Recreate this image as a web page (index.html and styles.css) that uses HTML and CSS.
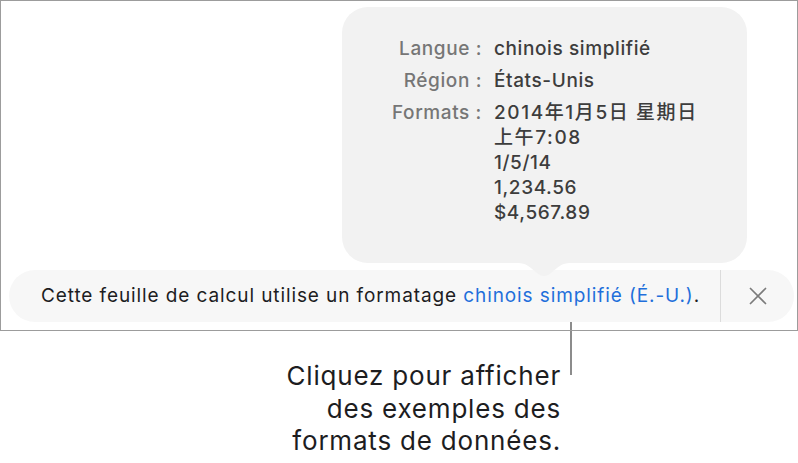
FILE: index.html
```html
<!DOCTYPE html>
<html lang="fr">
<head>
  <meta charset="UTF-8" />
  <title>Formatage de la feuille</title>
  <link rel="stylesheet" href="styles.css">
</head>
<body>

  <div class="screen">
    <div class="popover">
      <div class="info">
        <span class="label">Langue&nbsp;:</span>
        <span class="value">chinois simplifié</span>
        <span class="label">Région&nbsp;:</span>
        <span class="value">États-Unis</span>
        <span class="label">Formats&nbsp;:</span>
        <span class="value"><span class="cjk">2014年1月5日 星期日</span><br><span class="cjk">上午7:08</span><br>1/5/14<br>1,234.56<br>$4,567.89</span>
      </div>
      <svg class="arrow" width="52" height="16" viewBox="0 0 52 16">
        <path d="M0 0 H52 C44 0 40 4 33 10 C29 14 23 14 19 10 C12 4 8 0 0 0 Z" fill="#f2f2f2"/>
      </svg>
    </div>

    <div class="banner">
      <p class="banner-text">Cette feuille de calcul utilise un formatage <a href="#">chinois simplifié (É.-U.)</a>.</p>
      <button class="close" aria-label="Fermer">
        <svg width="18" height="18" viewBox="0 0 18 18">
          <path d="M1.5 1.5 L16.5 16.5 M16.5 1.5 L1.5 16.5" stroke="#7b7b7b" stroke-width="1.7" stroke-linecap="round"/>
        </svg>
      </button>
    </div>
  </div>

  <div class="callout">
    <p class="callout-text">Cliquez pour afficher<br>des exemples des<br>formats de données.</p>
    <span class="leader"></span>
  </div>

</body>
</html>
```

FILE: styles.css
```css
* { box-sizing: border-box; }
body {
  margin: 0;
  background: #fff;
  font-family: "Inter", "Noto Sans CJK SC", sans-serif;
  width: 798px;
}
.screen {
  position: relative;
  height: 331px;
  border: 1px solid #9c9c9c;
  display: flex;
  flex-direction: column;
  justify-content: flex-end;
  padding: 0 3px 8px 8px;
}
.popover {
  position: absolute;
  left: 341px;
  top: 6px;
  width: 405px;
  height: 256px;
  background: #f2f2f2;
  border-radius: 26px;
  padding: 29px 0 0 0;
  z-index: 2;
}
.arrow {
  position: absolute;
  left: 176px;
  top: 256px;
}
.info {
  display: grid;
  grid-template-columns: 140px auto;
  column-gap: 12px;
  row-gap: 7px;
  font-size: 19px;
  line-height: 25px;
  font-weight: 500;
  letter-spacing: 0.6px;
}
.label {
  text-align: right;
  color: #767676;
}
.value {
  color: #3d3d3d;
}
.cjk {
  letter-spacing: 1.6px;
}
.banner {
  display: flex;
  align-items: center;
  height: 52px;
  background: #f7f7f7;
  border-radius: 26px;
}
.banner-text {
  flex: 1;
  margin: 0 0 2px;
  padding-left: 32px;
  font-size: 19px;
  letter-spacing: 0.9px;
  color: #1d1d1f;
  white-space: nowrap;
}
.banner-text a {
  color: #1f6fdb;
  text-decoration: none;
}
.close {
  width: 74px;
  height: 100%;
  border: none;
  border-left: 1px solid #dcdcdc;
  background: none;
  display: flex;
  align-items: center;
  justify-content: center;
  padding: 0;
}
.callout {
  display: flex;
  align-items: flex-start;
  width: 572px;
  justify-content: flex-end;
  gap: 9px;
}
.callout-text {
  margin: 29px 0 0 0;
  text-align: right;
  font-size: 26px;
  line-height: 32.5px;
  letter-spacing: 0.8px;
  color: #1d1d1f;
}
.leader {
  width: 2px;
  height: 53px;
  margin-top: -9px;
  background: #8c8c8c;
}
```
